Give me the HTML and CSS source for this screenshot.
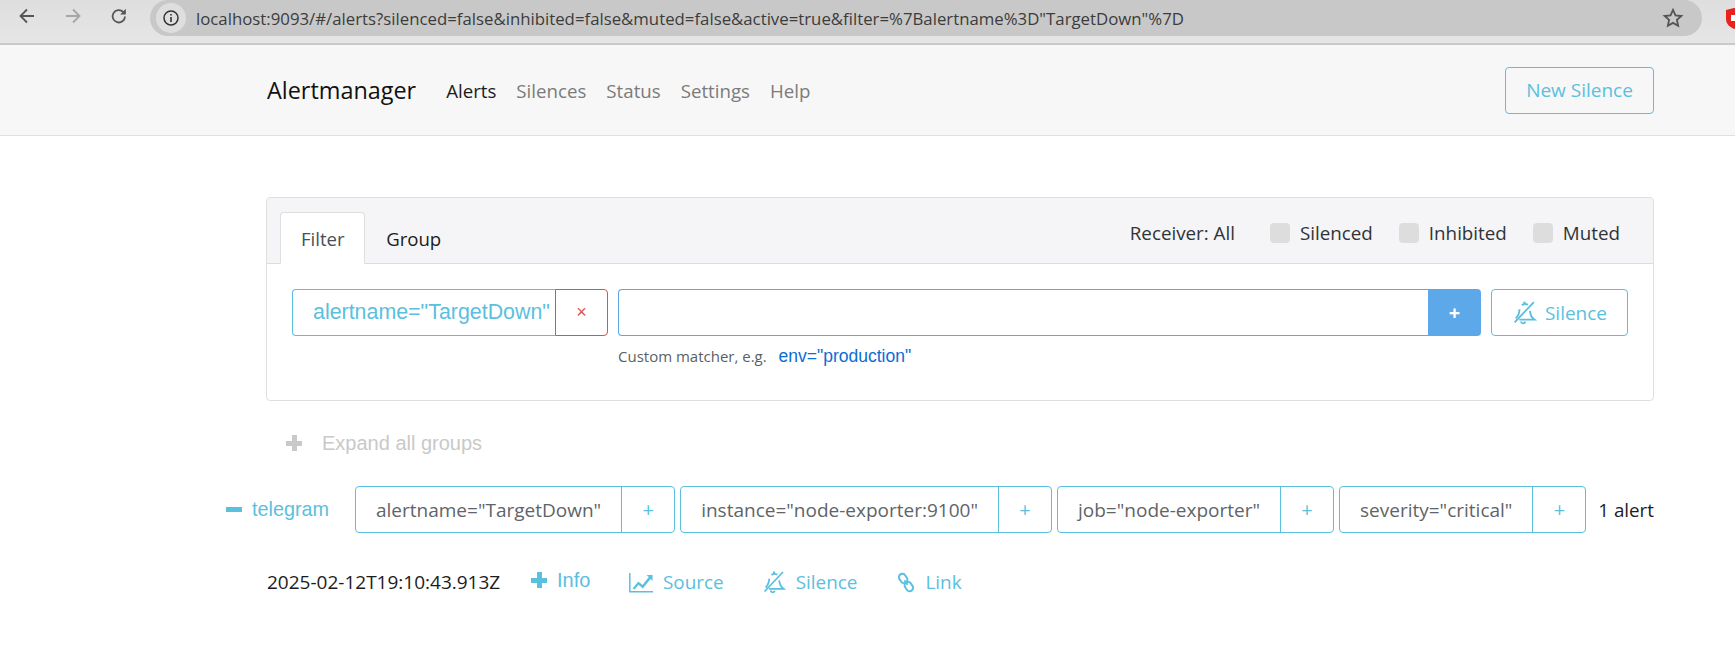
FILE: index.html
```html
<!DOCTYPE html>
<html lang="en">
<head>
  <meta charset="UTF-8">
  <title>Alertmanager</title>
  <link rel="stylesheet" href="styles.css">
</head>
<body>
  <svg class="defs" width="0" height="0" aria-hidden="true">
    <symbol id="bell-slash" viewBox="0 0 24 24">
      <path d="M2.5 21.5 21 2" fill="none" stroke="currentColor" stroke-width="1.8"/>
      <path d="M9.5 5C11 3.8 13.6 3.6 15.3 4.6M7.2 8.8C7.1 13 5.6 15.6 3.6 17.6M7 18.8H21.5C19 17 17.6 14.6 17.2 10.4M8.5 20.6C9.2 22.9 11.9 23 12.8 20.8" fill="none" stroke="currentColor" stroke-width="1.8"/>
      <path d="M12 1.5v2.5" stroke="currentColor" stroke-width="2"/>
    </symbol>
  </svg>

  <div class="browser-bar">
    <div class="browser-nav">
      <svg class="browser-icon" width="20" height="20" viewBox="0 0 20 20"><path d="M17 10H4M10 3.5 3.5 10l6.5 6.5" fill="none" stroke="#555" stroke-width="1.8"/></svg>
      <svg class="browser-icon" width="20" height="20" viewBox="0 0 20 20"><path d="M3 10h13M10 3.5l6.5 6.5-6.5 6.5" fill="none" stroke="#a5a5a5" stroke-width="1.8"/></svg>
      <svg class="browser-icon" width="20" height="20" viewBox="0 0 20 20"><path d="M16 10.5a6.2 6.2 0 1 1-1.8-4.6L16 7.5" fill="none" stroke="#555" stroke-width="1.8"/><path d="M16.8 2.8v5.6h-5.6z" fill="#555"/></svg>
    </div>
    <div class="url-bar">
      <span class="url-info">
        <svg width="18" height="18" viewBox="0 0 18 18"><circle cx="9" cy="9" r="7" fill="none" stroke="#333" stroke-width="1.5"/><path d="M9 8v5M9 5v1.6" stroke="#333" stroke-width="1.6"/></svg>
      </span>
      <span class="url-text">localhost:9093/#/alerts?silenced=false&amp;inhibited=false&amp;muted=false&amp;active=true&amp;filter=%7Balertname%3D"TargetDown"%7D</span>
      <svg class="url-star" width="22" height="22" viewBox="0 0 24 24"><path d="m12 3.2 2.7 5.9 6.4.7-4.8 4.3 1.3 6.4-5.6-3.2-5.6 3.2 1.3-6.4-4.8-4.3 6.4-.7z" fill="none" stroke="#555" stroke-width="2"/></svg>
    </div>
    <svg class="ext-shield" width="16" height="24" viewBox="0 0 16 24"><path d="M0 4 8 2l8 2v9c0 5-4 8-8 10-4-2-8-5-8-10z" fill="#e8231f"/><path d="M5 9h6v6H5z" fill="#fff"/></svg>
  </div>

  <nav class="navbar">
    <a class="brand">Alertmanager</a>
    <ul class="nav-links">
      <li class="active">Alerts</li>
      <li>Silences</li>
      <li>Status</li>
      <li>Settings</li>
      <li>Help</li>
    </ul>
    <a class="btn new-silence">New Silence</a>
  </nav>

  <main class="container">
    <section class="card">
      <header class="card-header">
        <div class="tabs">
          <a class="tab active">Filter</a>
          <a class="tab">Group</a>
        </div>
        <div class="filters">
          <span class="receiver">Receiver: All</span>
          <label class="check"><i></i>Silenced</label>
          <label class="check"><i></i>Inhibited</label>
          <label class="check"><i></i>Muted</label>
        </div>
      </header>
      <div class="card-body">
        <div class="matcher-row">
          <div class="matcher">
            <span class="matcher-text">alertname="TargetDown"</span>
            <span class="matcher-remove">×</span>
          </div>
          <div class="matcher-new">
            <div class="matcher-input">
              <input type="text">
              <span class="matcher-add">+</span>
            </div>
            <small class="hint">Custom matcher, e.g. <a>env="production"</a></small>
          </div>
          <a class="btn silence-btn">
            <svg width="25" height="25"><use href="#bell-slash"/></svg>Silence
          </a>
        </div>
      </div>
    </section>

    <div class="expand-all"><span class="icon-plus grey"></span>Expand all groups</div>

    <div class="group">
      <span class="group-name"><span class="icon-minus"></span>telegram</span>
      <div class="label"><span class="label-text">alertname="TargetDown"</span><span class="label-add">+</span></div>
      <div class="label"><span class="label-text">instance="node-exporter:9100"</span><span class="label-add">+</span></div>
      <div class="label"><span class="label-text">job="node-exporter"</span><span class="label-add">+</span></div>
      <div class="label"><span class="label-text">severity="critical"</span><span class="label-add">+</span></div>
      <span class="alert-count">1 alert</span>
    </div>

    <div class="alert-row">
      <span class="alert-time">2025-02-12T19:10:43.913Z</span>
      <a class="alert-info"><span class="icon-plus"></span>Info</a>
      <a class="alert-action">
        <svg width="24" height="21" viewBox="0 0 24 21"><path d="M.8 1v18.7H24" fill="none" stroke="currentColor" stroke-width="1.5"/><path d="m3.5 16.5 5.8-7 4.2 3.6L19.8 5l-2.3-2h6v6l-2-2-7.6 9.6-4.4-3.8-3.9 4.7z" fill="currentColor"/></svg>Source
      </a>
      <a class="alert-action">
        <svg width="24" height="24"><use href="#bell-slash"/></svg>Silence
      </a>
      <a class="alert-action">
        <svg class="link-icon" width="18" height="21" viewBox="0 0 20 22"><g transform="rotate(-35 10 11)" fill="none" stroke="currentColor" stroke-width="2.2"><rect x="6.2" y="0" width="7.6" height="11" rx="3.8"/><rect x="6.2" y="11" width="7.6" height="11" rx="3.8"/><path d="M10 8v6"/></g></svg>Link
      </a>
    </div>
  </main>
</body>
</html>
```

FILE: styles.css
```css
* {
  box-sizing: border-box;
}

body {
  margin: 0;
  background: #fff;
  color: #292b2c;
  font-family: "Open Sans", "Noto Sans", sans-serif;
  font-size: 19px;
  overflow: hidden;
}

a {
  color: #5bc0de;
  text-decoration: none;
}

.defs {
  display: block;
  height: 0;
}

/* browser chrome */
.browser-bar {
  height: 45px;
  display: flex;
  align-items: flex-start;
  background: linear-gradient(#dedede, #e6e6e6);
  border-bottom: 2px solid #c9c9c9;
  overflow: hidden;
}

.browser-nav {
  width: 150px;
  flex: none;
  height: 36px;
  display: flex;
  align-items: center;
  gap: 26px;
  padding: 0 0 4px 17px;
}

.browser-icon {
  display: block;
}

.url-bar {
  width: 1552px;
  height: 36px;
  flex: none;
  display: flex;
  align-items: center;
  background: #c8c8c8;
  border-radius: 18px;
  padding-left: 6px;
}

.url-info {
  width: 30px;
  height: 30px;
  border-radius: 50%;
  background: #dedede;
  display: flex;
  align-items: center;
  justify-content: center;
  margin-right: 10px;
}

.url-text {
  font-size: 16.8px;
  color: #3c3c3c;
  white-space: nowrap;
}

.url-star {
  margin-left: auto;
  margin-right: 18px;
}

.ext-shield {
  margin: 6px 0 0 24px;
  flex: none;
}

/* navbar */
.navbar {
  height: 91px;
  display: flex;
  align-items: center;
  padding: 0 81px 0 267px;
  background: #f7f7f7;
  border-bottom: 1px solid #e0e0e0;
}

.brand {
  color: #111;
  font-size: 23.4px;
  margin-right: 30px;
}

.nav-links {
  display: flex;
  gap: 20px;
  list-style: none;
  margin: 0;
  padding: 0;
  font-size: 18.7px;
  color: #7b7b7b;
}

.nav-links .active {
  color: #1c1c1c;
}

.btn {
  display: flex;
  align-items: center;
  justify-content: center;
  border: 1px solid #5bc0de;
  border-radius: 4px;
  color: #5bc0de;
  font-size: 19px;
  background: transparent;
}

.new-silence {
  margin-left: auto;
  width: 149px;
  height: 47px;
}

/* page */
.container {
  padding: 61px 81px 0 266px;
}

.card {
  height: 204px;
  border: 1px solid #dfdfdf;
  border-radius: 4px;
}

.card-header {
  height: 66px;
  display: flex;
  align-items: flex-end;
  justify-content: space-between;
  padding: 0 33px 0 13px;
  background: #f5f5f7;
  border-bottom: 1px solid #dcdcdc;
  border-radius: 4px 4px 0 0;
}

.tabs {
  display: flex;
  margin-bottom: -1px;
}

.tab {
  height: 52px;
  padding: 0 19.5px 0 20px;
  display: flex;
  align-items: center;
  color: #1c1c1c;
  font-size: 18.6px;
  border: 1px solid transparent;
  border-radius: 4px 4px 0 0;
}

.tab.active {
  background: #fff;
  color: #4a4f55;
  border-color: #dedede #dedede #fff;
}

.filters {
  display: flex;
  align-items: center;
  height: 66px;
  padding-top: 6px;
  font-size: 18.8px;
  color: #2f3337;
}

.receiver {
  margin-right: 35px;
}

.check {
  display: flex;
  align-items: center;
  gap: 10px;
  margin-right: 26px;
}

.check:last-child {
  margin-right: 0;
}

.check i {
  width: 20px;
  height: 20px;
  border-radius: 4px;
  background: #ddd;
}

.card-body {
  padding: 25px 25px 0;
}

.matcher-row {
  display: flex;
  align-items: flex-start;
}

.matcher {
  display: flex;
  height: 47px;
  flex: none;
  font-family: "Liberation Sans", sans-serif;
  font-size: 21.4px;
}

.matcher-text {
  display: flex;
  align-items: center;
  width: 263px;
  padding-left: 20px;
  color: #5bc0de;
  border: 1px solid #5bc0de;
  border-right: none;
  border-radius: 4px 0 0 4px;
}

.matcher-remove {
  display: flex;
  align-items: center;
  justify-content: center;
  width: 53px;
  font-size: 18px;
  color: #d9534f;
  border: 1px solid #d9534f;
  border-radius: 0 4px 4px 0;
}

.matcher-new {
  width: 863px;
  margin-left: 10px;
  flex: none;
}

.matcher-input {
  display: flex;
  height: 47px;
}

.matcher-input input {
  flex: 1;
  min-width: 0;
  border: 1px solid #5ca8e6;
  border-right: none;
  border-radius: 4px 0 0 4px;
  outline: none;
}

.matcher-add {
  width: 53px;
  display: flex;
  align-items: center;
  justify-content: center;
  font-size: 20px;
  font-weight: 700;
  color: #fff;
  background: #5ca8e8;
  border-radius: 0 4px 4px 0;
}

.hint {
  display: block;
  margin-top: 10px;
  font-size: 15px;
  color: #5a5f64;
}

.hint a {
  margin-left: 8px;
  font-family: "Liberation Sans", sans-serif;
  font-size: 17.5px;
  color: #0c6cd4;
}

.silence-btn {
  width: 137px;
  height: 47px;
  margin-left: 10px;
  flex: none;
  gap: 8px;
}

.expand-all {
  display: flex;
  align-items: center;
  height: 24px;
  margin: 30px 0 0 20px;
  font-family: "Liberation Sans", sans-serif;
  font-size: 20px;
  color: #c9c9c9;
}

.icon-plus,
.icon-minus {
  display: inline-block;
  width: 16px;
  height: 16px;
  margin-right: 20px;
  background:
    linear-gradient(currentColor, currentColor) center / 100% 5px no-repeat,
    linear-gradient(currentColor, currentColor) center / 5px 100% no-repeat;
}

.icon-minus {
  background: linear-gradient(currentColor, currentColor) center / 100% 5px no-repeat;
  margin-right: 10px;
}

.group {
  display: flex;
  align-items: center;
  height: 47px;
  margin: 31px 0 0 -40px;
}

.group-name {
  display: flex;
  align-items: center;
  width: 129px;
  flex: none;
  color: #5bc0de;
  font-family: "Liberation Sans", sans-serif;
  font-size: 19.8px;
}

.label {
  display: flex;
  height: 47px;
  margin-right: 5px;
  border: 1px solid #5bc0de;
  border-radius: 4px;
  flex: none;
}

.label-text {
  display: flex;
  align-items: center;
  padding: 0 20px;
  color: #5f6468;
  font-size: 19px;
  border-right: 1px solid #5bc0de;
}

.label-add {
  width: 52px;
  display: flex;
  align-items: center;
  justify-content: center;
  color: #5bc0de;
  font-size: 20px;
}

.alert-count {
  margin-left: auto;
  font-size: 18.8px;
  color: #1c1c1c;
  white-space: nowrap;
}

.alert-row {
  display: flex;
  align-items: center;
  height: 30px;
  margin: 34px 0 0 1px;
  font-size: 18.9px;
}

.alert-time {
  width: 264px;
  font-size: 19px;
  color: #1c1c1c;
}

.alert-info {
  display: flex;
  align-items: center;
  width: 98px;
  margin-top: -4px;
  font-family: "Liberation Sans", sans-serif;
  font-size: 20px;
}

.alert-info .icon-plus {
  margin-right: 10px;
}

.alert-action {
  display: flex;
  align-items: center;
  gap: 10px;
  margin-right: 38px;
}

.link-icon {
  margin-left: 2px;
}
```
